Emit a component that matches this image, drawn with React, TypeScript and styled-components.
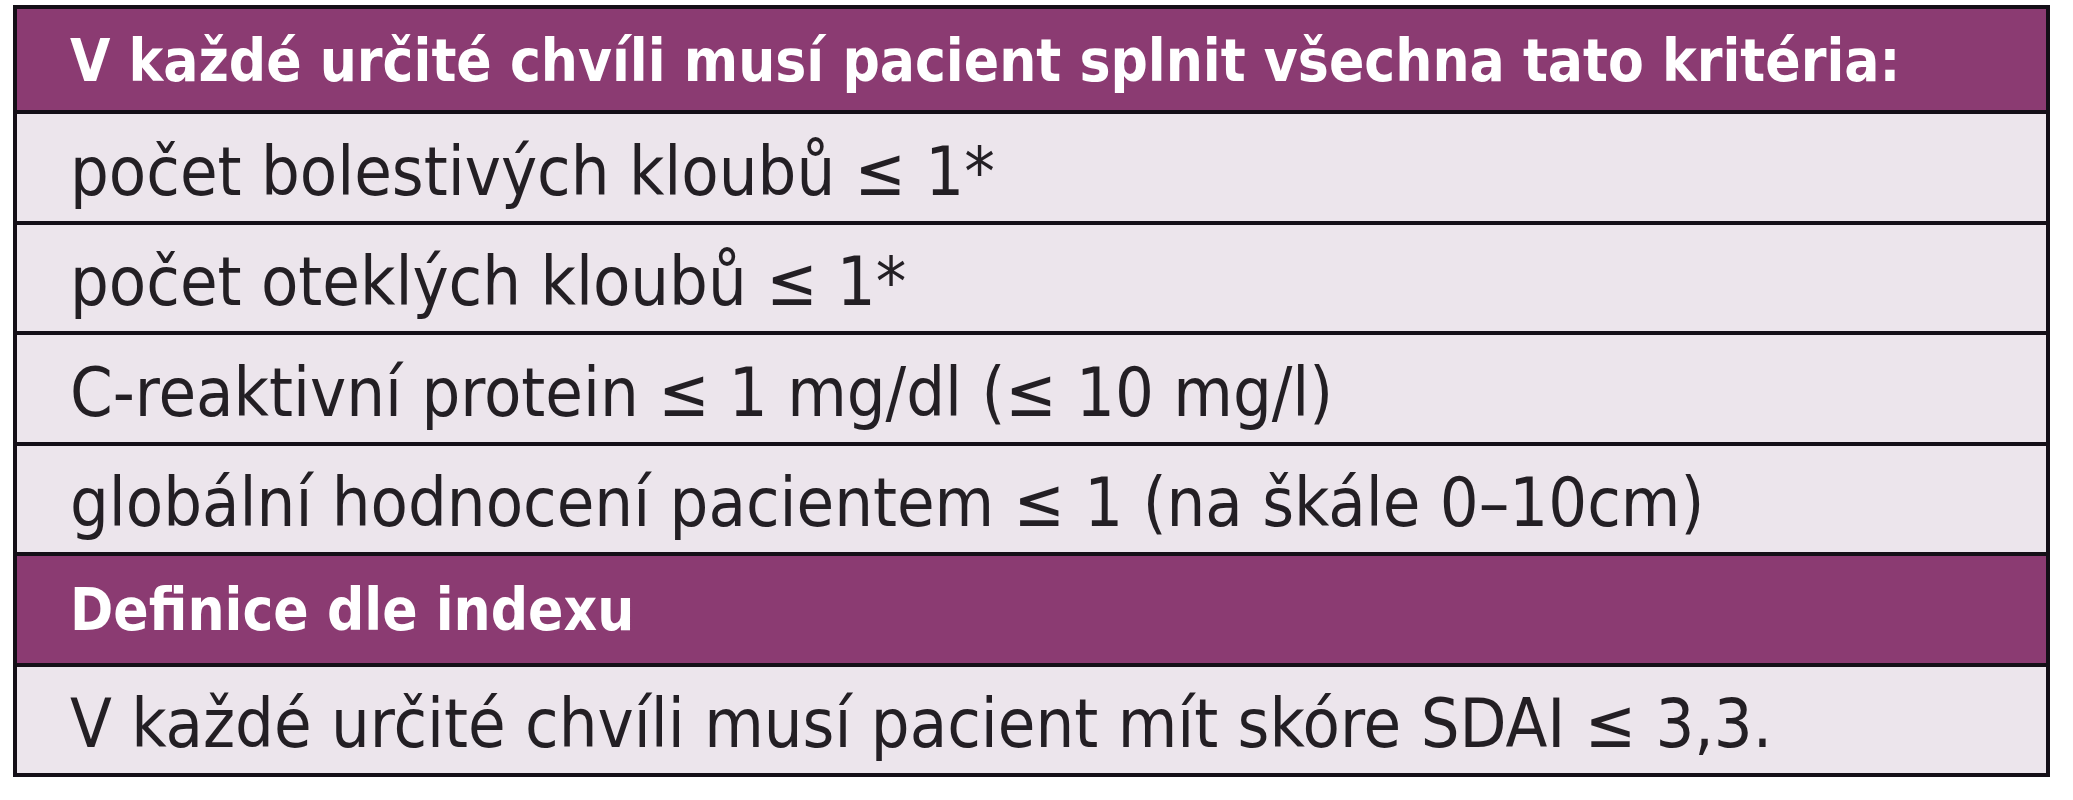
import styled, { createGlobalStyle } from 'styled-components';

const GlobalStyle = createGlobalStyle`
  html, body {
    margin: 0;
    padding: 0;
    background: #ffffff;
  }
`;

const Page = styled.div`
  padding: 5px 0 0 13px;
`;

const Card = styled.div`
  width: 2029px;
  border: 4px solid #140f17;
  display: flex;
  flex-direction: column;
  background: #ece5ec;
`;

// first row has no top rule, the others carry a 4px rule above them
const Row = styled.div<{ $head?: boolean; $first?: boolean }>`
  height: ${p => (p.$first ? '101px' : '110.5px')};
  display: flex;
  align-items: center;
  padding-left: 53px;
  padding-top: ${p => (p.$head ? '2px' : '8px')};
  box-sizing: border-box;
  border-top: ${p => (p.$first ? 'none' : '4px solid #140f17')};
  background: ${p => (p.$head ? '#8b3b72' : '#ece5ec')};
  color: ${p => (p.$head ? '#ffffff' : '#231f24')};
  font-family: "Liberation Sans Narrow", "DejaVu Sans Condensed", "Liberation Sans", sans-serif;
  font-stretch: condensed;
  font-size: ${p => (p.$head ? '58px' : '68px')};
  font-weight: ${p => (p.$head ? 700 : 400)};
  white-space: nowrap;
`;

const rows: { text: string; head?: boolean }[] = [
  { text: 'V každé určité chvíli musí pacient splnit všechna tato kritéria:', head: true },
  { text: 'počet bolestivých kloubů ≤ 1*' },
  { text: 'počet oteklých kloubů ≤ 1*' },
  { text: 'C-reaktivní protein ≤ 1 mg/dl (≤ 10 mg/l)' },
  { text: 'globální hodnocení pacientem ≤ 1 (na škále 0–10cm)' },
  { text: 'Definice dle indexu', head: true },
  { text: 'V každé určité chvíli musí pacient mít skóre SDAI ≤ 3,3.' },
];

export default function App() {
  return (
    <>
      <GlobalStyle />
      <Page>
        <Card>
          {rows.map((r, i) => (
            <Row key={i} $head={r.head} $first={i === 0}>
              {r.text}
            </Row>
          ))}
        </Card>
      </Page>
    </>
  );
}
